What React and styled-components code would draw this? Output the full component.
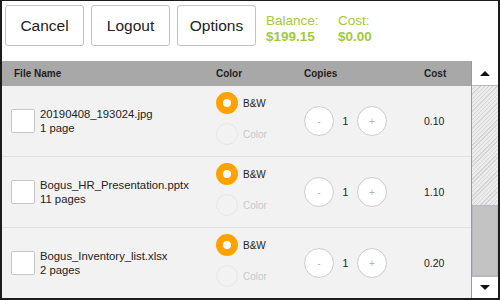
import React from 'react';
import styled, { createGlobalStyle } from 'styled-components';

const GlobalStyle = createGlobalStyle`
  html, body {
    margin: 0;
    padding: 0;
    background: #fff;
  }
  * {
    box-sizing: border-box;
  }
`;

const Screen = styled.div`
  width: 500px;
  height: 300px;
  border: 2px solid #1c1c1c;
  border-top-width: 1px;
  background: #fff;
  display: flex;
  flex-direction: column;
  overflow: hidden;
  font-family: "Liberation Sans", Arial, sans-serif;
  color: #222;
`;

const TopBar = styled.header`
  height: 60px;
  flex: none;
  display: flex;
  align-items: flex-start;
  gap: 7px;
  padding: 4px 0 0 3px;
`;

const Button = styled.button`
  width: 79px;
  height: 41px;
  border: 1px solid #c2c2c2;
  border-radius: 3px;
  background: #fff;
  font-family: inherit;
  font-size: 15.5px;
  color: #222;
  padding: 0;
`;

const Totals = styled.div`
  display: flex;
  margin-left: 3px;
  padding-top: 8px;
`;

const Total = styled.div`
  width: 72px;
  color: #a3c93a;
  font-size: 13.5px;
  line-height: 16px;

  strong {
    display: block;
    font-weight: bold;
  }
`;

const Body = styled.div`
  flex: 1;
  display: flex;
  min-height: 0;
`;

const Table = styled.div`
  flex: 1;
  display: flex;
  flex-direction: column;
  background: #f2f2f2;
  min-width: 0;
`;

const cols = '214px 88px 120px 1fr';

const HeadRow = styled.div`
  height: 25px;
  flex: none;
  display: grid;
  grid-template-columns: ${cols};
  align-items: center;
  background: #a8a8a8;
  font-size: 10px;
  font-weight: bold;
  color: #1e1e1e;
`;

const HeadCell = styled.div`
  padding-left: ${p => p.$pad || 0}px;
`;

const Row = styled.div`
  height: 71px;
  flex: none;
  display: grid;
  grid-template-columns: ${cols};
  align-items: center;
  border-bottom: 1px solid #e0e0e0;
`;

const FileCell = styled.div`
  display: flex;
  align-items: center;
  gap: 5px;
  padding-left: 9px;
`;

const Check = styled.span`
  width: 24px;
  height: 24px;
  flex: none;
  background: #fff;
  border: 1px solid #c6c6c6;
  border-radius: 2px;
`;

const FileText = styled.div`
  font-size: 11.3px;
  line-height: 14px;
  color: #222;
`;

const RadioGroup = styled.div`
  align-self: start;
  padding-top: 6px;
  display: flex;
  flex-direction: column;
  gap: 9px;
`;

const RadioLabel = styled.label`
  display: flex;
  align-items: center;
  gap: 5px;
  font-size: 10px;
  color: ${p => (p.$on ? '#222' : '#c8c8c8')};
`;

const RadioDot = styled.span`
  width: 22px;
  height: 22px;
  border-radius: 50%;
  flex: none;
  background: ${p => (p.$on ? '#fff' : 'transparent')};
  border: ${p => (p.$on ? '7px solid #ffa200' : '1px solid #e6e6e6')};
`;

const Copies = styled.div`
  display: flex;
  align-items: center;
`;

const RoundBtn = styled.span`
  width: 30px;
  height: 30px;
  border-radius: 50%;
  background: #fff;
  border: 1px solid #cdcdcd;
  display: flex;
  align-items: center;
  justify-content: center;
  font-size: 10px;
  color: #b4b4b4;
`;

const Count = styled.span`
  width: 23px;
  text-align: center;
  font-size: 10.5px;
`;

const Price = styled.div`
  font-size: 10.5px;
`;

const ScrollBar = styled.div`
  width: 27px;
  flex: none;
  display: flex;
  flex-direction: column;
  border-left: 1px solid #9a9a9a;
`;

const Arrow = styled.div`
  height: ${p => p.$h}px;
  flex: none;
  background: #fff;
  display: flex;
  align-items: center;
  justify-content: center;
  border-bottom: ${p => (p.$up ? '1px solid #b8b8b8' : 'none')};
  border-top: ${p => (p.$up ? 'none' : '1px solid #b8b8b8')};

  &::after {
    content: '';
    border-left: 5px solid transparent;
    border-right: 5px solid transparent;
    ${p => (p.$up ? 'border-bottom: 5px solid #111;' : 'border-top: 5px solid #111;')}
  }
`;

const Track = styled.div`
  flex: 1;
  background: repeating-linear-gradient(
    -45deg,
    #d4d4d4 0 1px,
    #ececec 1px 3px
  );
`;

const Thumb = styled.div`
  height: 71px;
  flex: none;
  background: #c3c3c3;
  border: 1px solid #b6b6c4;
`;

const files = [
  { name: '20190408_193024.jpg', pages: '1 page', cost: '0.10' },
  { name: 'Bogus_HR_Presentation.pptx', pages: '11 pages', cost: '1.10' },
  { name: 'Bogus_Inventory_list.xlsx', pages: '2 pages', cost: '0.20' },
];

function FileRow({ file }) {
  return (
    <Row>
      <FileCell>
        <Check />
        <FileText>
          <div>{file.name}</div>
          <div>{file.pages}</div>
        </FileText>
      </FileCell>
      <RadioGroup>
        <RadioLabel $on>
          <RadioDot $on />
          B&amp;W
        </RadioLabel>
        <RadioLabel>
          <RadioDot />
          Color
        </RadioLabel>
      </RadioGroup>
      <Copies>
        <RoundBtn>-</RoundBtn>
        <Count>1</Count>
        <RoundBtn>+</RoundBtn>
      </Copies>
      <Price>{file.cost}</Price>
    </Row>
  );
}

export default function App() {
  return (
    <>
      <GlobalStyle />
      <Screen>
        <TopBar>
          <Button>Cancel</Button>
          <Button>Logout</Button>
          <Button>Options</Button>
          <Totals>
            <Total>
              Balance:
              <strong>$199.15</strong>
            </Total>
            <Total>
              Cost:
              <strong>$0.00</strong>
            </Total>
          </Totals>
        </TopBar>
        <Body>
          <Table>
            <HeadRow>
              <HeadCell $pad={12}>File Name</HeadCell>
              <HeadCell>Color</HeadCell>
              <HeadCell>Copies</HeadCell>
              <HeadCell>Cost</HeadCell>
            </HeadRow>
            {files.map(f => (
              <FileRow key={f.name} file={f} />
            ))}
          </Table>
          <ScrollBar>
            <Arrow $up $h={25} />
            <Track />
            <Thumb />
            <Arrow $h={22} />
          </ScrollBar>
        </Body>
      </Screen>
    </>
  );
}
